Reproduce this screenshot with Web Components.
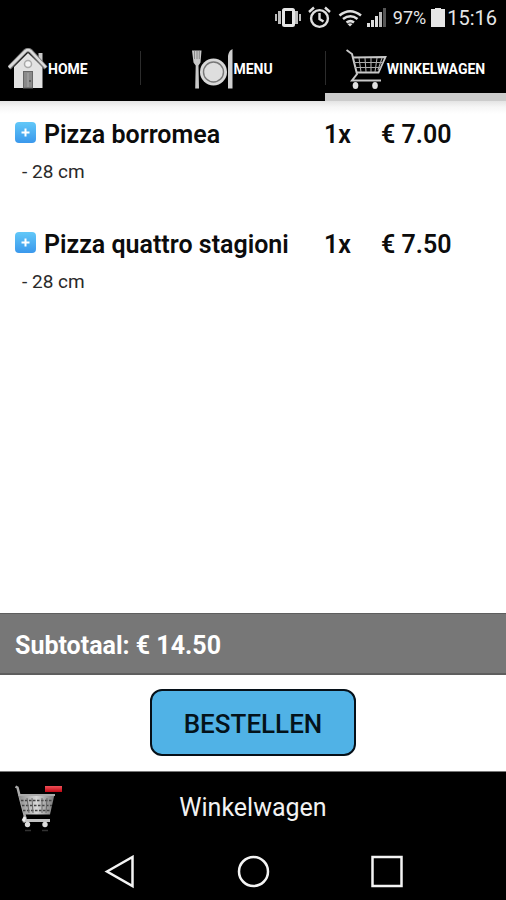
<!DOCTYPE html>
<html lang="nl">
<head>
<meta charset="utf-8">
<meta name="viewport" content="width=device-width, initial-scale=1">
<title>Winkelwagen</title>
<style>
  html, body { margin: 0; background: #000; }
  body { font-family: Roboto, "Liberation Sans", sans-serif; }
</style>
</head>
<body>
<cart-app></cart-app>

<template id="status-bar">
  <style>
    :host { display: flex; justify-content: flex-end; align-items: center; height: 36px; padding-right: 9px; background: #000; color: #e6e6e6; font-size: 20px; line-height: 24px; }
    svg { display: block; }
    .level { font-size: 18px; margin: 0 5px 0 6px; }
    .icons { display: flex; align-items: center; }
    time { margin-left: 2px; }
  </style>
  <div class="icons">
    <svg width="113" height="26" viewBox="274 5 113 26" role="img" aria-label="Trillen, wekker, wifi, signaal">
      <g fill="#bdbdbd">
        <rect x="275" y="14" width="2" height="7"/><rect x="278" y="11" width="3" height="13"/>
        <rect x="295" y="11" width="3" height="13"/><rect x="299" y="14" width="2" height="7"/>
      </g>
      <rect x="283.5" y="9.5" width="10" height="16" rx="1" fill="none" stroke="#e6e6e6" stroke-width="3"/>
      <g fill="none" stroke="#e0e0e0" stroke-width="2.4">
        <circle cx="319.500" cy="18.500" r="8.400"/>
        <path d="M319.500 13v6l4 2.500M309 12l5-4.500M330 12l-5-4.500"/>
      </g>
      <g fill="none" stroke="#e0e0e0" stroke-width="2.600">
        <path d="M339.500 15.500q10.500-8.500 21.500 0M343 19q7.500-5.500 14.500 0M346.500 22.500q4-2.800 7.500 0"/>
      </g>
      <path d="M347.500 24q2.500-1.500 5 0l-2.500 2.500z" fill="#e0e0e0"/>
      <g fill="#dedede">
        <rect x="367" y="23" width="3" height="4"/><rect x="371" y="20" width="3" height="7"/>
        <rect x="375" y="16" width="3" height="11"/><rect x="379" y="12" width="3" height="15" fill="#bbb"/>
        <rect x="383" y="8" width="3" height="19" fill="#555"/>
      </g>
    </svg>
    <span class="level">97%</span>
    <svg width="14" height="20" viewBox="0 0 14 20" aria-hidden="true"><path d="M4 0h6v1h4v18H0V1h4z" fill="#e6e6e6"/></svg>
  </div>
  <time>15:16</time>
</template>

<template id="nav-tab">
  <style>
    :host { display: block; box-sizing: border-box; height: 65px; position: relative; }
    a { display: flex; align-items: center; justify-content: center; box-sizing: border-box; height: 100%; color: #fff; text-decoration: none; font-size: 14px; line-height: 16px; font-weight: 700; }
    :host([edge]) a { justify-content: flex-start; padding-left: 8px; }
    :host([divided])::before { content: ""; position: absolute; left: 0; top: 15px; width: 1px; height: 34px; background: #2c2c2c; }
    :host([active])::after { content: ""; position: absolute; left: 0; right: 0; bottom: 0; height: 8px; background: #ccc; }
    ::slotted(svg) { display: block; }
  </style>
  <a href="#"><slot name="icon"></slot><slot></slot></a>
</template>

<template id="cart-line">
  <style>
    :host { display: grid; grid-template-columns: minmax(0, 1fr) 57px 110px; align-content: start; box-sizing: border-box; height: 110px; padding: 18px 15px 0; color: #0c0c0c; font-size: 25px; line-height: 32px; font-weight: 600; }
    .name { display: flex; align-items: center; gap: 8px; white-space: nowrap; }
    button { display: block; width: 21px; height: 21px; padding: 0; border: 0; background: none; margin-bottom: 5px; }
    svg { display: block; }
    .option { grid-column: 1 / -1; padding: 8px 0 0 7px; font-size: 19px; line-height: 26px; font-weight: 400; color: #2a2a2a; }
  </style>
  <div class="name">
    <button aria-label="Meer">
      <svg width="21" height="21" viewBox="0 0 21 21">
        <defs><linearGradient id="g" x1="0" y1="0" x2="0" y2="1"><stop offset="0" stop-color="#62c8f8"/><stop offset="1" stop-color="#3a98ec"/></linearGradient></defs>
        <rect width="21" height="21" rx="4" fill="url(#g)"/>
        <path d="M10.500 6.500v8M6.500 10.500h8" stroke="#fff" stroke-width="2"/>
      </svg>
    </button>
    <slot name="name"></slot>
  </div>
  <slot name="qty"></slot>
  <slot name="price"></slot>
  <div class="option"><slot name="option"></slot></div>
</template>

<template id="order-panel">
  <style>
    :host { display: block; background: #fff; }
    .total { box-sizing: border-box; height: 62px; padding: 5px 15px 0; border-top: 1px solid #5e5e5e; border-bottom: 2px solid #5e5e5e; background: #777; color: #fff; display: flex; align-items: center; font-size: 25px; line-height: 30px; font-weight: 700; }
    .action { display: flex; justify-content: center; padding: 14px 0 15px; }
    button { box-sizing: border-box; height: 67px; padding: 3px 32px 0; border: 2px solid #061018; border-radius: 12px; background: #50b2e6; color: #04121a; font: 500 26px/30px Roboto, "Liberation Sans", sans-serif; }
  </style>
  <div class="total"><slot></slot></div>
  <div class="action"><button><slot name="action"></slot></button></div>
</template>

<template id="title-bar">
  <style>
    :host { display: grid; grid-template-columns: 48px 1fr 48px; align-items: center; height: 72px; padding: 0 15px; background: #000; color: #f2f2f2; }
    h1 { margin: 0; font-size: 25px; line-height: 30px; font-weight: 400; text-align: center; }
    svg { display: block; }
  </style>
  <svg width="48" height="48" viewBox="15 783 48 48" aria-hidden="true">
    <defs>
      <linearGradient id="c" x1="0" x2="1" y1="0" y2="0"><stop offset="0" stop-color="#8b8b8b"/><stop offset=".5" stop-color="#d6d6d6"/><stop offset="1" stop-color="#777"/></linearGradient>
      <linearGradient id="r" x1="0" x2="0" y1="0" y2="1"><stop offset="0" stop-color="#f05058"/><stop offset="1" stop-color="#c00814"/></linearGradient>
    </defs>
    <path d="M15.500 785.500l2 1 4 16 4 15-2 4" fill="none" stroke="#aaa" stroke-width="2.500"/>
    <path d="M18.500 793.500H54.500L50 813.500H24z" fill="url(#c)"/>
    <path d="M18.500 794H55" stroke="#aaa" stroke-width="2"/>
    <path d="M21 799.500h32M22 804.500h30M23 809.500h28" stroke="#444" stroke-width="1.600" stroke-dasharray="2.500 1.500"/>
    <path d="M27 797l2 15M32 797l1 15M47 797l-1 15M42 797v15" stroke="#666" stroke-width="1"/>
    <path d="M24 819.500H50" stroke="#c4c4c4" stroke-width="3"/>
    <path d="M25 816l-2 4" stroke="#eee" stroke-width="3"/>
    <circle cx="27.500" cy="823.500" r="2.700" fill="#ddd"/><circle cx="45" cy="823.500" r="2.700" fill="#ddd"/>
    <path d="M25 829.500h6M42 829.500h6" stroke="#333" stroke-width="1.500"/>
    <rect x="45" y="785" width="17" height="6" fill="url(#r)"/>
  </svg>
  <h1><slot></slot></h1>
</template>

<template id="system-nav">
  <style>
    :host { display: grid; grid-template-columns: repeat(3, 134px); justify-content: center; height: 56px; background: #000; }
    button { display: flex; align-items: center; justify-content: center; padding: 0; border: 0; background: none; }
    svg { display: block; fill: none; stroke: #f4f4f4; stroke-width: 2.500; }
  </style>
  <button aria-label="Terug"><svg width="34" height="34" viewBox="0 0 34 34"><path d="M5 16.500L30.500 2V31z"/></svg></button>
  <button aria-label="Start"><svg width="34" height="34" viewBox="0 0 34 34"><circle cx="17.500" cy="16.500" r="14.500"/></svg></button>
  <button aria-label="Recent"><svg width="34" height="34" viewBox="0 0 34 34"><rect x="2.500" y="2" width="29" height="29"/></svg></button>
</template>

<template id="cart-app">
  <style>
    :host { display: flex; flex-direction: column; min-height: 100vh; background: #fff; }
    nav { display: grid; grid-template-columns: 140fr 185fr 181fr; background: #000; }
    main { flex: 1; background: linear-gradient(#e4e4e4, #f6f6f6 6px, #fff 13px); }
    title-bar { border-top: 1px solid #777; }
  </style>
  <status-bar></status-bar>
  <nav>
    <nav-tab edge>
      <svg slot="icon" width="40" height="42" viewBox="8 47 40 42" aria-hidden="true">
        <path d="M38.500 52h4v11l-4-4z" fill="#c8c8c8"/>
        <path d="M14 66L28 52 42.500 66V87H14z" fill="#e2e2e2"/>
        <path d="M9 67L25.500 50q2.500-2 5 0L46 67" fill="none" stroke="#777" stroke-width="4.500"/>
        <path d="M9 66.500L25.500 50q2.500-2 5 0L46 66.500" fill="none" stroke="#dcdcdc" stroke-width="2.500"/>
        <circle cx="28" cy="63" r="3.500" fill="#f4f4f4" stroke="#aaa" stroke-width="1.500"/>
        <rect x="23.500" y="70.500" width="9" height="16.500" fill="#8a8a8a" stroke="#666"/>
        <path d="M28 72v14" stroke="#aaa"/><path d="M30 79v2" stroke="#333"/>
      </svg>HOME</nav-tab>
    <nav-tab divided>
      <svg slot="icon" width="41" height="42" viewBox="192 47 41 42" aria-hidden="true">
        <path d="M192 49.500h9.500l-1 12-2 3 .500 23h-3.800l.500-23-2.200-3z" fill="#c9c9c9"/>
        <path d="M194.500 50v8M197 50v8M199.300 50v8" stroke="#777" stroke-width=".8"/>
        <circle cx="213.500" cy="71" r="13.500" fill="#d8d8d8"/>
        <circle cx="213.500" cy="71" r="10" fill="#dedede" stroke="#777" stroke-width="1.400"/>
        <path d="M228 87.500V55q.500-5 4.500-7v39.500z" fill="#cfcfcf"/>
      </svg>MENU</nav-tab>
    <nav-tab divided active>
      <svg slot="icon" width="41" height="42" viewBox="347 47 41 42" aria-hidden="true">
        <g fill="none" stroke="#c8c8c8">
          <path d="M347.500 49l5.500 4 5 20-5 6.500H382" stroke-width="2"/>
          <path d="M354 56.500l32.500-.5-7 15.500H357.500" stroke-width="1.800"/>
          <path d="M355 61.500h29M356 66.500h26M360 57l2 14M366 57l1 14M372 57v14M378 57l-2 14M383 57l-4 12" stroke-width="1.100" stroke="#aaa"/>
        </g>
        <ellipse cx="356.500" cy="84.500" rx="2.800" ry="3.500" fill="#e0e0e0"/><ellipse cx="376" cy="84.500" rx="2.800" ry="3.500" fill="#e0e0e0"/>
      </svg>WINKELWAGEN</nav-tab>
  </nav>
  <main>
    <cart-line><span slot="name">Pizza borromea</span><span slot="qty">1x</span><span slot="price">€ 7.00</span><span slot="option">- 28 cm</span></cart-line>
    <cart-line><span slot="name">Pizza quattro stagioni</span><span slot="qty">1x</span><span slot="price">€ 7.50</span><span slot="option">- 28 cm</span></cart-line>
  </main>
  <order-panel>Subtotaal: € 14.50<span slot="action">BESTELLEN</span></order-panel>
  <title-bar>Winkelwagen</title-bar>
  <system-nav></system-nav>
</template>

<script>
  class TemplateElement extends HTMLElement {
    constructor() {
      super();
      const template = document.getElementById(this.localName);
      this.attachShadow({ mode: "open" }).append(document.importNode(template.content, true));
    }
  }
  for (const name of ["status-bar", "nav-tab", "cart-line", "order-panel", "title-bar", "system-nav", "cart-app"]) {
    customElements.define(name, class extends TemplateElement {});
  }
</script>
</body>
</html>
